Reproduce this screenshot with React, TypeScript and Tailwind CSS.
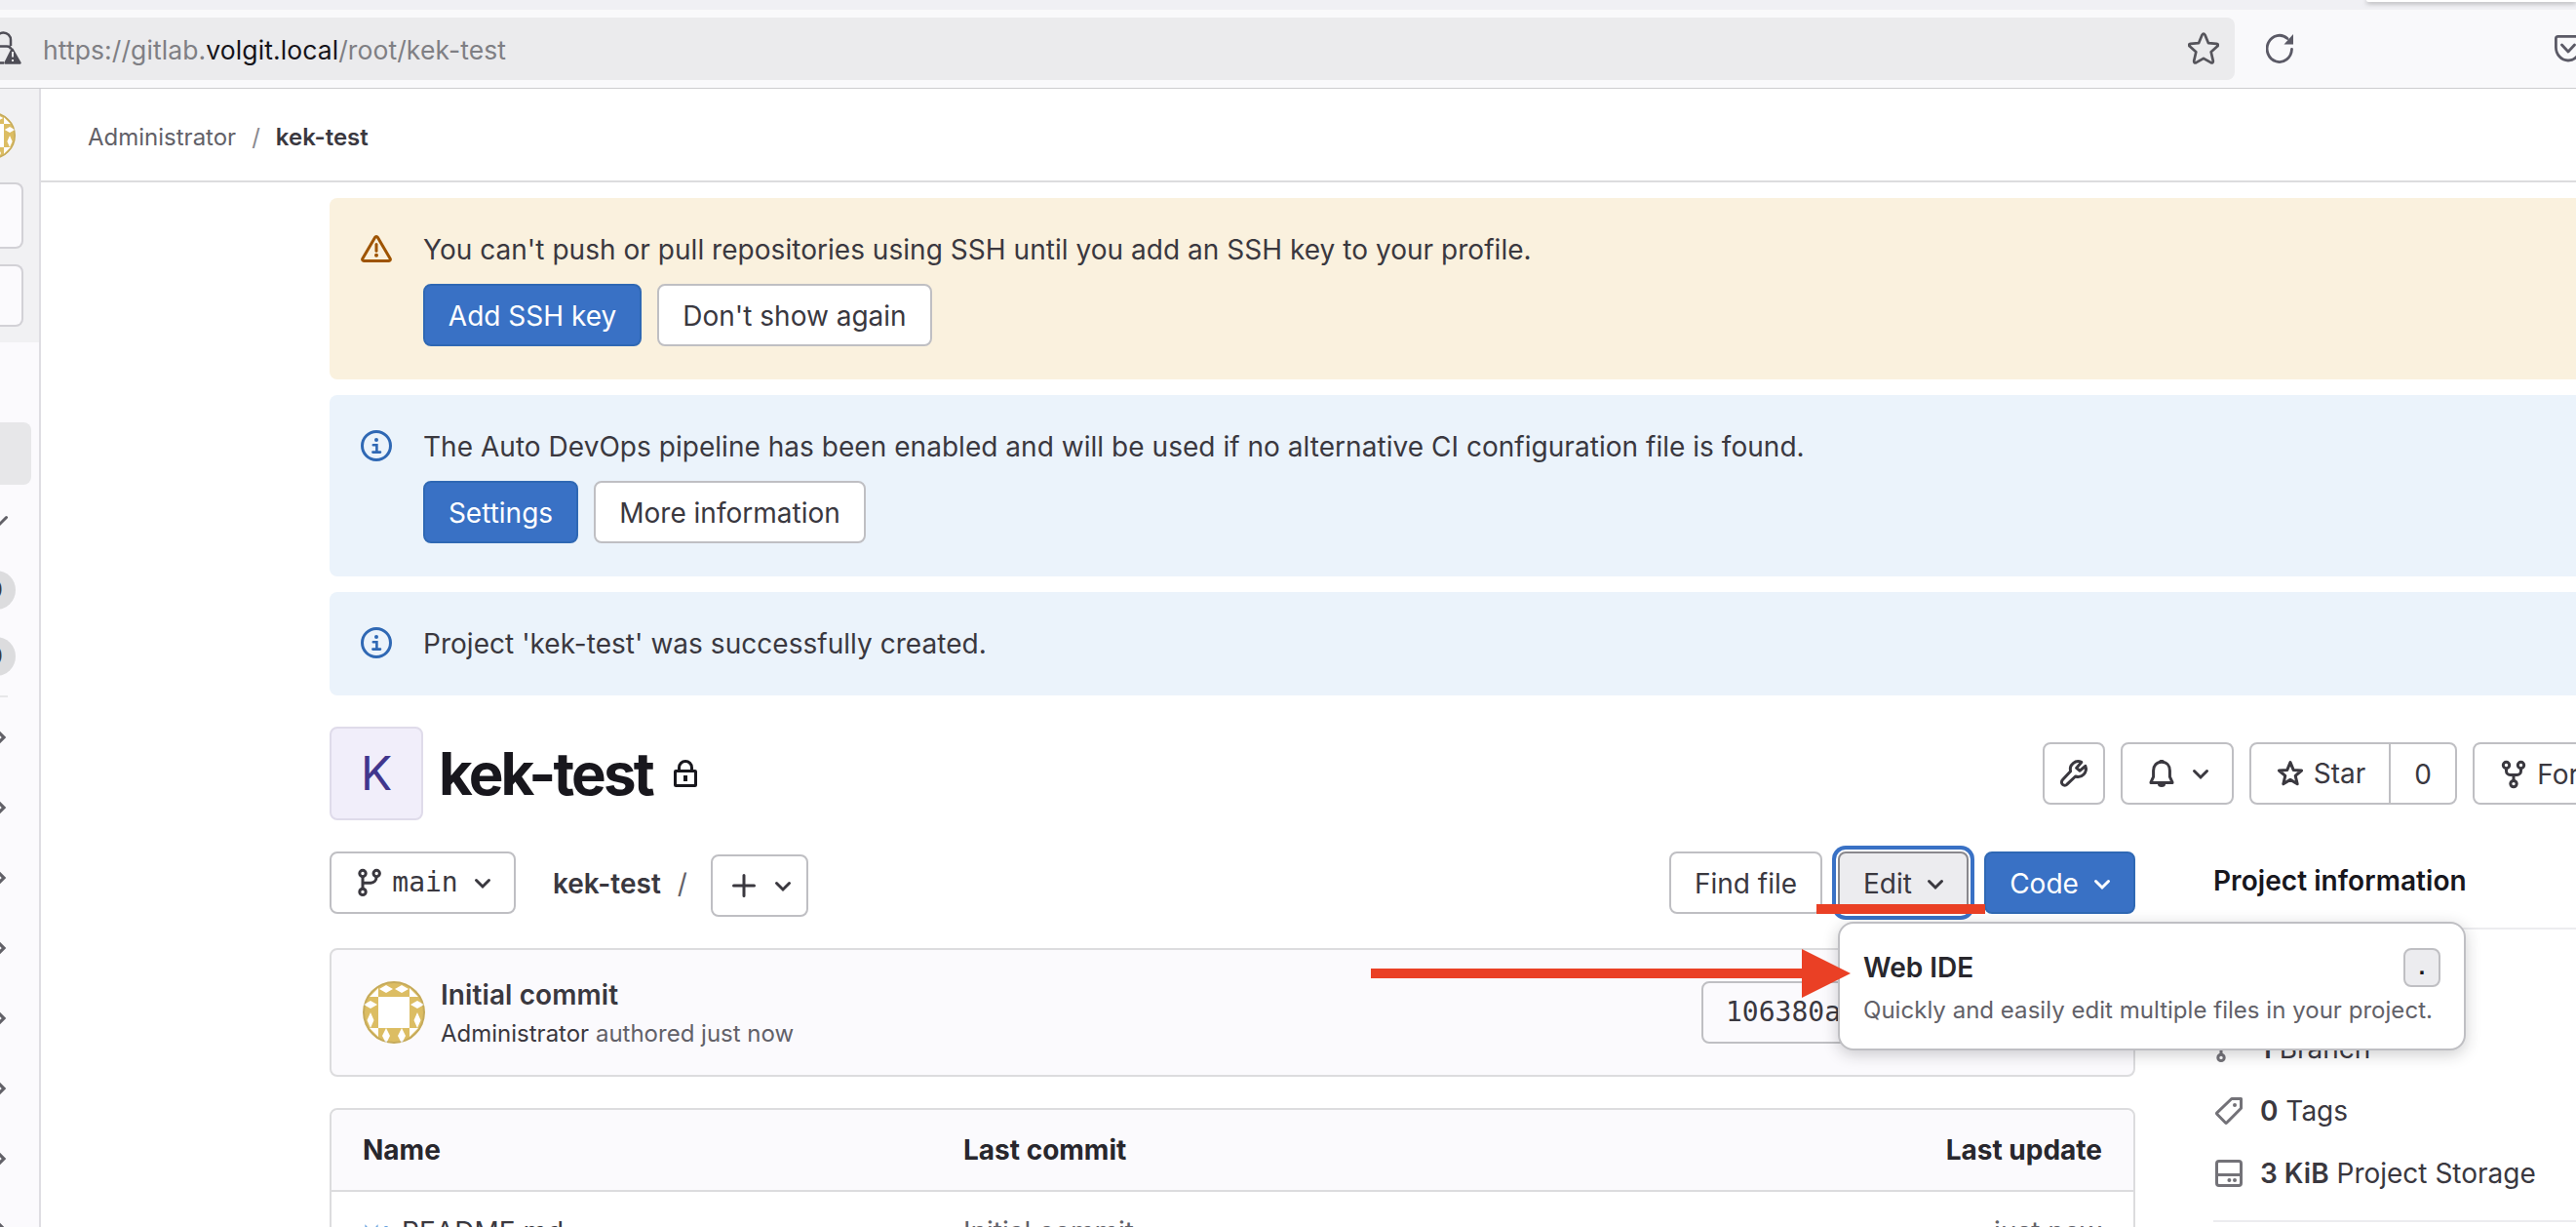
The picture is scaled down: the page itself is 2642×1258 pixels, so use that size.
import type { ReactNode } from "react";

type IconProps = { className?: string };

function Chevron({ className = "" }: IconProps) {
  return (
    <svg viewBox="0 0 16 16" className={`size-8 shrink-0 ${className}`} fill="none" stroke="currentColor" strokeWidth="1.5" strokeLinecap="round" strokeLinejoin="miter">
      <path d="M4.75 6.75 8 10l3.25-3.25" />
    </svg>
  );
}

function ChevronRight() {
  return (
    <svg viewBox="0 0 16 16" className="size-8 shrink-0" fill="none" stroke="currentColor" strokeWidth="1.6" strokeLinecap="round">
      <path d="M6.75 4.75 10 8l-3.25 3.25" />
    </svg>
  );
}

function WarningIcon() {
  return (
    <svg viewBox="0 0 16 16" className="size-8 shrink-0 text-[#9e5400]" fill="none" stroke="currentColor" strokeWidth="1.5" strokeLinejoin="round">
      <path d="M7.35 2.1a.75.75 0 0 1 1.3 0l6.45 11.05a.75.75 0 0 1-.65 1.1H1.55a.75.75 0 0 1-.65-1.1z" />
      <path d="M8 5.7v3.4" strokeLinecap="round" />
      <circle cx="8" cy="11.4" r="1" fill="currentColor" stroke="none" />
    </svg>
  );
}

function InfoIcon() {
  return (
    <svg viewBox="0 0 16 16" className="size-8 shrink-0 text-[#2f68b4]" fill="none" stroke="currentColor" strokeWidth="1.5">
      <circle cx="8" cy="8" r="7.25" />
      <path d="M6.4 7.6H8.2v3.6M6.2 11.3h3.8" strokeWidth="1.3" strokeLinecap="round" />
      <circle cx="8" cy="5" r="1" fill="currentColor" stroke="none" />
    </svg>
  );
}

function LockIcon() {
  return (
    <svg viewBox="0 0 16 16" className="size-8 shrink-0" fill="none" stroke="currentColor" strokeWidth="1.5">
      <rect x="2.75" y="6.75" width="10.5" height="7.5" rx="0.3" />
      <path d="M4.75 6.5V5a3.25 3.25 0 0 1 6.5 0v1.5" />
      <path d="M7 9h2v3H7z" fill="currentColor" stroke="none" />
    </svg>
  );
}

function WrenchIcon() {
  return (
    <svg viewBox="0 0 16 16" className="size-8 shrink-0" fill="none" stroke="currentColor" strokeWidth="1.5" strokeLinejoin="round" strokeLinecap="round">
      <path d="M11.9 2.2A4.05 4.05 0 0 0 6.3 6.9L2.2 11.3a1.55 1.55 0 0 0 2.3 2.3L8.8 9.5a4.05 4.05 0 0 0 5.1-5.3L11.1 6.6 9.3 5.2z" />
    </svg>
  );
}

function BellIcon() {
  return (
    <svg viewBox="0 0 16 16" className="size-8 shrink-0" fill="none" stroke="currentColor" strokeWidth="1.5" strokeLinejoin="round" strokeLinecap="round">
      <path d="M8 2.1c-2.6 0-4.2 1.9-4.2 4.4v3.2L2.5 12.6v.2h11v-.2l-1.3-2.9V6.5C12.2 4 10.6 2.1 8 2.1z" />
      <path d="M7.4 1.7h1.2" />
      <path d="M6 13.5h4a2 1.5 0 0 1-4 0z" fill="currentColor" stroke="none" />
    </svg>
  );
}

function StarIcon() {
  return (
    <svg viewBox="0 0 16 16" className="size-8 shrink-0" fill="none" stroke="currentColor" strokeWidth="1.5" strokeLinejoin="round">
      <path d="m8 2.3 1.6 3.9 4.2.3-3.2 2.7 1 4.2L8 11.2l-3.6 2.2 1-4.2-3.2-2.7 4.2-.3z" />
    </svg>
  );
}

function ForkIcon() {
  return (
    <svg viewBox="0 0 16 16" className="size-8 shrink-0" fill="none" stroke="currentColor" strokeWidth="1.5">
      <circle cx="4.25" cy="3.25" r="1.6" />
      <circle cx="11.75" cy="3.25" r="1.6" />
      <circle cx="8" cy="12.8" r="1.6" />
      <path d="M4.25 5v1.2a2 2 0 0 0 2 2h3.5a2 2 0 0 0 2-2V5M8 8.2V11" />
    </svg>
  );
}

function BranchIcon({ className = "" }: IconProps) {
  return (
    <svg viewBox="0 0 16 16" className={`size-8 shrink-0 ${className}`} fill="none" stroke="currentColor" strokeWidth="1.5">
      <circle cx="4" cy="3.25" r="1.6" />
      <circle cx="11.1" cy="3.25" r="1.6" />
      <circle cx="4" cy="12.7" r="1.6" />
      <path d="M4 5v6M4 8.1h4.2a2.8 2.8 0 0 0 2.8-2.8V5" />
    </svg>
  );
}

function PlusIcon() {
  return (
    <svg viewBox="0 0 16 16" className="size-8 shrink-0" fill="none" stroke="currentColor" strokeWidth="1.5" strokeLinecap="round">
      <path d="M8 2.75v10.5M2.75 8h10.5" />
    </svg>
  );
}

function TagIcon() {
  return (
    <svg viewBox="0 0 16 16" className="size-8 shrink-0 text-[#737278]" fill="none" stroke="currentColor" strokeWidth="1.5" strokeLinejoin="round">
      <path d="M9.4 1.75h4.85v4.9L6.9 14a.5.5 0 0 1-.7 0L1.9 9.6a.5.5 0 0 1 0-.7z" />
      <circle cx="11" cy="5" r="1" fill="currentColor" stroke="none" />
    </svg>
  );
}

function DiskIcon() {
  return (
    <svg viewBox="0 0 16 16" className="size-8 shrink-0 text-[#737278]" fill="none" stroke="currentColor" strokeWidth="1.5">
      <rect x="1.75" y="1.75" width="12.5" height="12.5" rx="1.2" />
      <path d="M2 8.75h12" />
      <circle cx="8.2" cy="11.5" r="1" fill="currentColor" stroke="none" />
      <circle cx="11" cy="11.5" r="1" fill="currentColor" stroke="none" />
    </svg>
  );
}

function MarkdownIcon() {
  return (
    <svg viewBox="0 0 16 16" className="mr-2 size-8 shrink-0" fill="none" stroke="#6aa3e0" strokeWidth="1.6">
      <path d="M2 12V6.2L4.5 9 7 6.200V12M12 5v6M9.600 8.800l2.400 2.600 2.400-2.600" />
    </svg>
  );
}

function Identicon({ className = "" }: IconProps) {
  return (
    <svg viewBox="0 0 64 64" className={`shrink-0 rounded-full ${className}`}>
      <rect width="64" height="64" fill="#dcbd63" />
      <g fill="#fff">
        <rect x="16" y="16" width="32" height="32" />
        <path d="M16 7v9H7zM48 7v9h9zM16 57v-9H7zM48 57v-9h9z" />
        <path d="M17 8l7-4 7 4-7 4zM33 8l7-4 7 4-7 4z" />
        <path d="M1 24l7-4 7 4-7 4zM49 24l7-4 7 4-7 4z" />
        <path d="M8 32l3.500 8L8 48l-3.500-8zM56 32l3.500 8-3.500 8-3.500-8z" />
        <path d="M24 48l4 8-4 8-4-8zM40 48l4 8-4 8-4-8z" />
        <path d="M5 14l8-8-1-1-8 8zM59 14l-8-8 1-1 8 8zM5 50l8 8-1 1-8-8zM59 50l-8 8 1 1 8-8z" />
      </g>
      <circle cx="32" cy="32" r="31" fill="none" stroke="#1f1e24" strokeOpacity="0.12" strokeWidth="2" />
    </svg>
  );
}

function Button({ children, className = "" }: { children: ReactNode; className?: string }) {
  return (
    <button className={`flex h-16 shrink-0 items-center justify-center rounded-lg border-2 whitespace-nowrap ${className}`}>
      {children}
    </button>
  );
}

const plain = "border-[#bfbfc3] bg-white text-[#3a383f]";
const primary = "border-[#2f68b4] bg-[#3971c5] text-white";

function Alert({ icon, text, tone, children }: { icon: ReactNode; text: string; tone: string; children?: ReactNode }) {
  return (
    <section className={`flex gap-8 rounded-l-lg py-8 pl-8 ${tone}`}>
      <div className="mt-1">{icon}</div>
      <div>
        <p className="h-[42px] leading-[43px] tracking-[0.035px]">{text}</p>
        {children && <div className="mt-3.5 mb-0.5 flex gap-4">{children}</div>}
      </div>
    </section>
  );
}

function BrowserBar() {
  return (
    <header className="relative h-[91px] shrink-0 border-b border-[#cccccf] bg-[#f9f9fb]">
      <div className="flex h-2.5 justify-end overflow-hidden bg-[#f0f0f4]">
        <div className="h-0.5 w-[215px] rounded-bl-lg bg-white shadow-[0_1px_5px_rgba(0,0,0,0.5)]" />
      </div>
      <div className="flex h-20 items-center">
        <div className="flex h-16 w-[2292px] shrink-0 items-center rounded-r-lg bg-[#ebebed]">
          <svg viewBox="0 0 24 36" className="h-9 w-6 shrink-0" fill="none" stroke="#4f4e57" strokeWidth="2.5">
            <path d="M-4 15V9a6 6 0 0 1 15 0v6M-4 15.500h11q4 0 4 3M-4 32.500h8" />
            <path d="M12.500 18.500 20.500 32.500H5.500z" fill="#4f4e57" strokeLinejoin="round" />
            <path d="M13 21v5.500M13 29v2" stroke="#ebebed" strokeWidth="2" />
          </svg>
          <p className="mt-1 ml-5 text-[26.5px] tracking-[0.1px] text-[#7f7f84]">
            https://gitlab.<span className="text-[#15141a]">volgit.local</span>/root/kek-test
          </p>
          <svg viewBox="0 0 32 34" className="mr-4 ml-auto h-[34px] w-8 shrink-0" fill="none" stroke="#55545b" strokeWidth="2.7" strokeLinejoin="round">
            <path d="M14.500 2.800q1.500-2.600 3 0l3.500 8.400 8.300.7q2.700.6.800 2.700l-6.400 5.700 2.100 9.100q.2 2.800-2.300 1.800L16 26.800l-7.500 4.400q-2.500 1-2.300-1.800l2.100-9.100-6.400-5.700q-1.900-2.100.8-2.700l8.300-.7z" />
          </svg>
        </div>
        <svg viewBox="0 0 28 32" className="ml-8 h-8 w-7 shrink-0" fill="none" stroke="#5b5a66" strokeWidth="2.8">
          <path d="M26.500 16.500A12.700 13.600 0 1 1 22 5.500" strokeLinecap="round" />
          <path d="M28 1v10.500h-9.500z" fill="#5b5a66" stroke="none" />
        </svg>
        <svg viewBox="0 0 28 28" className="ml-[268px] h-7 w-7 shrink-0" fill="none" stroke="#5b5a66" strokeWidth="2.8" strokeLinecap="round" strokeLinejoin="round">
          <path d="M3.500 1.400h21q2.100 0 2.100 2.100v9a12.600 13.500 0 0 1-25.200 0v-9q0-2.100 2.100-2.100zM7.500 10l6.500 7 6.500-7" />
        </svg>
      </div>
    </header>
  );
}

function Sidebar() {
  return (
    <nav className="flex w-[42px] shrink-0 flex-col overflow-hidden border-r-2 border-[#dedde2] bg-[#fbfafd] text-[#626168]">
      <div className="flex h-[260px] shrink-0 flex-col bg-[#f1f1f3] pt-6">
        <Identicon className="-ml-8 size-12" />
        <div className="mt-6 h-[68px] w-6 rounded-r-lg border-2 border-l-0 border-[#d2d1d6] bg-[#fbfafd]" />
        <div className="mt-4 h-16 w-6 rounded-r-lg border-2 border-l-0 border-[#d2d1d6] bg-[#fbfafd]" />
      </div>
      <div className="mt-[82px] h-16 w-8 shrink-0 rounded-r-lg bg-[#e7e7e9]" />
      <Chevron className="mt-5 -ml-4" />
      <div className="mt-9 -ml-8 flex h-10 w-12 shrink-0 items-center justify-end rounded-full bg-[#dcdcde] pr-[13px] text-2xl text-[#3a383f]">0</div>
      <div className="mt-7 -ml-8 flex h-10 w-12 shrink-0 items-center justify-end rounded-full bg-[#dcdcde] pr-[13px] text-2xl text-[#3a383f]">0</div>
      <div className="mt-5 h-0.5 w-2 shrink-0 bg-[#e7e7e9]" />
      <div className="mt-[25px] -ml-4 flex flex-col gap-10">
        {Array.from({ length: 8 }, (_, i) => (
          <ChevronRight key={i} />
        ))}
      </div>
    </nav>
  );
}

function EditDropdown() {
  return (
    <div className="relative ml-4">
      <Button className="w-[134px] gap-2 border-[#89888d] bg-[#ececef] pt-px text-[#3a383f] shadow-[0_0_0_2px_#fff,0_0_0_6px_#3971c5]">
        <span>Edit</span>
        <Chevron className="-mr-2" />
      </Button>
      <div className="absolute top-[54px] -left-[22px] z-10 h-2.5 w-[173px] bg-[#ea4025]" />
      <div className="absolute top-[72px] left-0 z-10 h-[132px] w-[644px] rounded-2xl border-2 border-[#bfbfc3] bg-white px-6 pt-5 shadow-[0_4px_16px_rgba(31,30,36,0.22)]">
        <div className="flex h-[50px] items-center justify-between">
          <span className="font-semibold text-[#28272d]">Web IDE</span>
          <kbd className="flex h-10 w-[38px] items-center justify-center rounded-lg border-2 border-[#bfbfc3] bg-[#ececef] pt-0.5 font-['Liberation_Mono',monospace] text-2xl font-bold text-[#18171d]">.</kbd>
        </div>
        <p className="mt-[3px] text-2xl leading-8 tracking-[0.03px] whitespace-nowrap text-[#626168]">Quickly and easily edit multiple files in your project.</p>
      </div>
      <svg viewBox="0 0 492 50" className="absolute top-[100px] -left-[479px] z-20 h-[50px] w-[492px] max-w-none" fill="#ea4025">
        <path d="M0 20h442V0l50 25-50 25V30H0z" />
      </svg>
    </div>
  );
}

function Repository() {
  return (
    <div className="w-[1852px] shrink-0">
      <div className="flex h-16">
        <Button className={`w-[191px] ${plain}`}>
          <BranchIcon />
          <span className="ml-1.5 font-['DejaVu_Sans_Mono',monospace]">main</span>
          <Chevron className="ml-[9px] -mr-2" />
        </Button>
        <div className="ml-[38px] flex items-center pt-px">
          <span className="font-semibold text-[#3a383f]">kek-test</span>
          <span className="ml-[17px] text-[#626168]">/</span>
        </div>
        <Button className={`mt-[3px] ml-auto w-[100px] gap-2 ${plain}`}>
          <PlusIcon />
          <Chevron className="-mr-2" />
        </Button>
        <div className="w-[883px]" />
        <Button className={`w-[157px] pt-px ${plain}`}>Find file</Button>
        <EditDropdown />
        <Button className={`ml-4 w-[155px] gap-2 pt-px ${primary}`}>
          <span>Code</span>
          <Chevron className="-mr-2" />
        </Button>
      </div>
      <section className="mt-[35px] flex h-[132px] items-center rounded-lg border-2 border-[#dcdcde] bg-[#fbfafd] px-8">
        <Identicon className="size-16" />
        <div className="mt-[3px] ml-4">
          <p className="leading-10 font-semibold tracking-[0.1px] text-[#3a383f]">Initial commit</p>
          <p className="text-2xl leading-10 text-[#626168]">
            <span className="text-[#3a383f]">Administrator</span> authored just now
          </p>
        </div>
        <Button className={`ml-auto w-[411px] !justify-start pl-[23px] font-['DejaVu_Sans_Mono',monospace] ${plain} !bg-[#fbfafd]`}>106380a4</Button>
      </section>
      <section className="mt-8 rounded-t-lg border-2 border-[#dcdcde]">
        <div className="grid h-[84px] grid-cols-[616px_1fr_auto] items-center rounded-t-lg border-b-2 border-[#dcdcde] bg-[#fbfafd] px-8 font-bold text-[#28272d]">
          <span>Name</span>
          <span>Last commit</span>
          <span>Last update</span>
        </div>
        <div className="grid h-[82px] grid-cols-[616px_1fr_auto] items-center px-8 text-[#626168]">
          <span className="flex items-center text-[#3a383f]">
            <MarkdownIcon />
            README.md
          </span>
          <span>Initial commit</span>
          <span>just now</span>
        </div>
      </section>
    </div>
  );
}

function ProjectInfo() {
  return (
    <aside className="ml-20 flex-1 text-[#3a383f]">
      <div className="h-20 border-b-2 border-[#ececef] pt-2.5">
        <h2 className="leading-[41px] font-semibold tracking-[0.06px] text-[#18171d]">Project information</h2>
      </div>
      <ul className="flex h-[300px] flex-col justify-end gap-8 border-b-2 border-[#ececef] pb-8 leading-8">
        <li className="flex gap-4"><BranchIcon className="text-[#737278]" /><span><b className="font-semibold">1</b> Branch</span></li>
        <li className="flex gap-4"><TagIcon /><span><b className="font-semibold">0</b> Tags</span></li>
        <li className="flex gap-4"><DiskIcon /><span><b className="font-semibold">3 KiB</b> Project Storage</span></li>
      </ul>
    </aside>
  );
}

export default function App() {
  return (
    <div className="flex h-screen w-full flex-col overflow-hidden bg-white font-['Inter',sans-serif] text-[28px] text-[#3a383f]">
      <BrowserBar />
      <div className="flex min-h-0 flex-1">
        <Sidebar />
        <main className="flex min-w-0 flex-1 flex-col overflow-hidden">
          <div className="flex h-24 shrink-0 items-center border-b-2 border-[#dcdcde] pt-1.5 pl-12 text-2xl">
            <span className="text-[#626168]">Administrator</span>
            <span className="mx-4 text-[#89888d]">/</span>
            <span className="font-semibold text-[#3a383f]">kek-test</span>
          </div>
          <div className="flex flex-col pt-4 pl-[296px]">
            <div className="flex flex-col gap-4">
              <Alert icon={<WarningIcon />} tone="bg-[#faf1de]" text="You can't push or pull repositories using SSH until you add an SSH key to your profile.">
                <Button className={`w-[224px] pt-0.5 ${primary}`}>Add SSH key</Button>
                <Button className={`w-[282px] pt-0.5 ${plain}`}>Don't show again</Button>
              </Alert>
              <Alert icon={<InfoIcon />} tone="bg-[#ebf3fb]" text="The Auto DevOps pipeline has been enabled and will be used if no alternative CI configuration file is found.">
                <Button className={`w-[159px] pt-0.5 ${primary}`}>Settings</Button>
                <Button className={`w-[279px] pt-0.5 ${plain}`}>More information</Button>
              </Alert>
              <Alert icon={<InfoIcon />} tone="bg-[#ebf3fb]" text="Project 'kek-test' was successfully created." />
            </div>
            <div className="mt-8 flex h-24 items-center">
              <div className="flex size-24 items-center justify-center rounded-lg border-2 border-[#dfdbea] bg-[#f1eefa] text-[48px] text-[#41368d]">K</div>
              <h1 className="ml-4 w-[221px] text-[60px] font-bold tracking-[-2.8px] whitespace-nowrap text-[#18171d]">kek-test</h1>
              <div className="ml-4 text-[#18171d]"><LockIcon /></div>
              <div className="ml-auto flex gap-4">
                <Button className={`w-16 ${plain}`}><WrenchIcon /></Button>
                <Button className={`w-[116px] gap-2 ${plain}`}><BellIcon /><Chevron className="-mr-2" /></Button>
                <div className="flex">
                  <Button className={`w-[145px] gap-2 rounded-r-none ${plain}`}><StarIcon />Star</Button>
                  <Button className={`-ml-0.5 w-[70px] rounded-l-none pt-0.5 ${plain}`}>0</Button>
                </div>
                <div className="w-[106px] overflow-hidden">
                  <Button className={`w-[151px] gap-2 pt-px ${plain}`}><ForkIcon />Fork</Button>
                </div>
              </div>
            </div>
            <div className="mt-8 flex">
              <Repository />
              <ProjectInfo />
            </div>
          </div>
        </main>
      </div>
    </div>
  );
}
